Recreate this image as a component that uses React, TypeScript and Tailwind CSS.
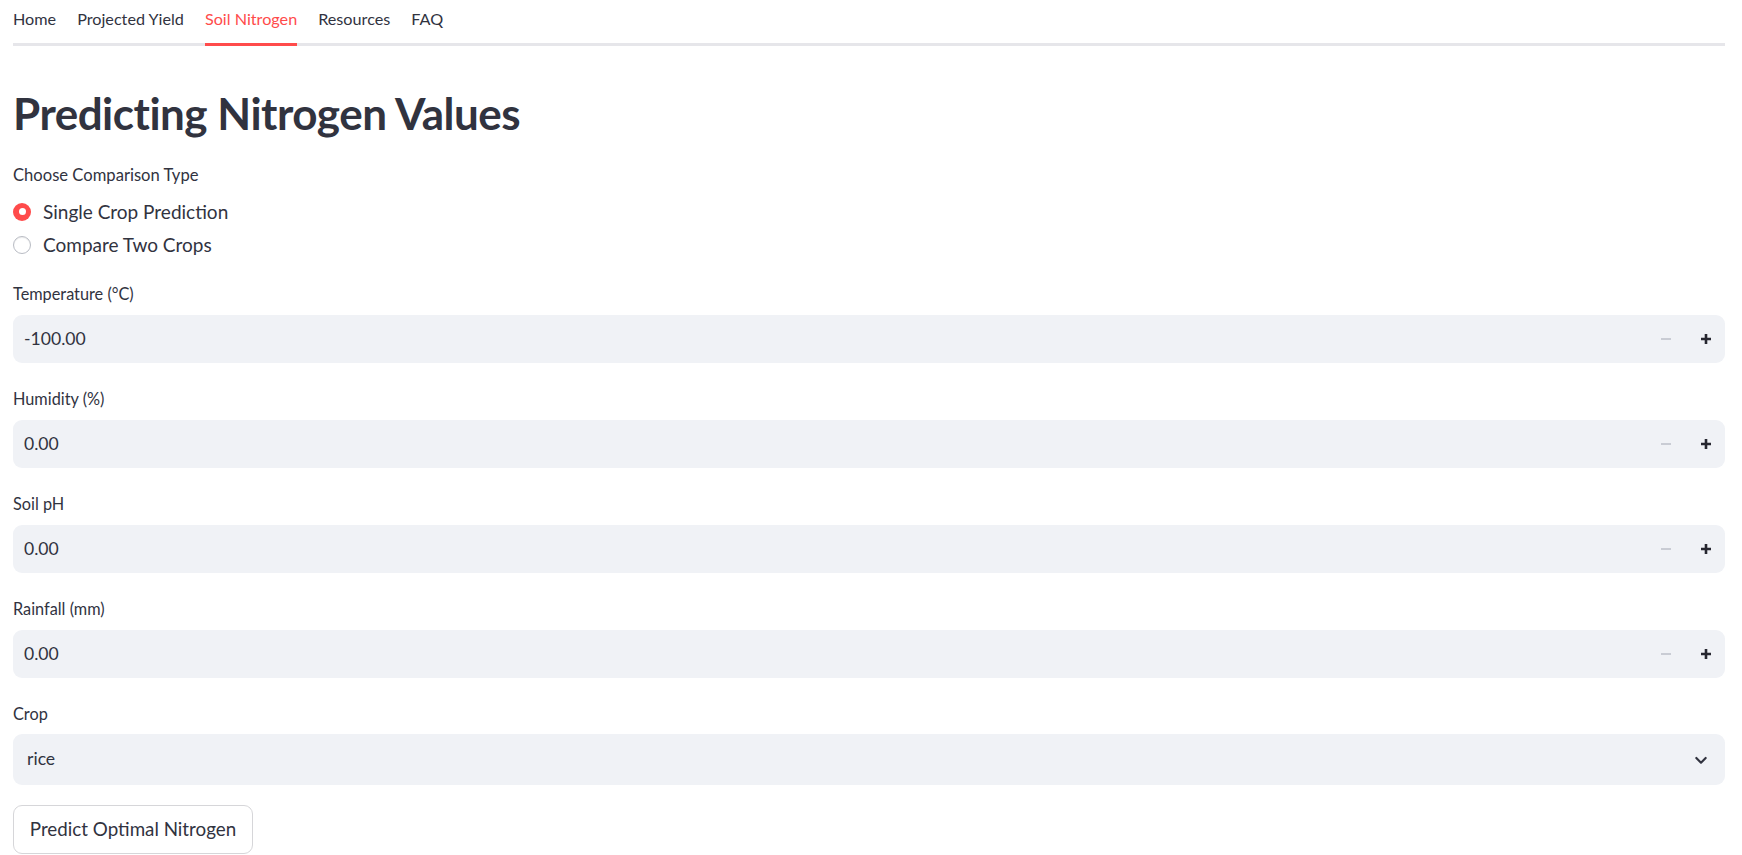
import React from "react";

const font = { fontFamily: '"Source Sans Pro", Lato, "Noto Sans", sans-serif' };

function Plus() {
  return (
    <svg width="12" height="12" viewBox="0 0 12 12">
      <path d="M6 1v10M1 6h10" stroke="#262730" strokeWidth="2.6" />
    </svg>
  );
}
function Minus() {
  return (
    <svg width="12" height="12" viewBox="0 0 12 12">
      <path d="M1 6h10" stroke="#c9ccd4" strokeWidth="2" />
    </svg>
  );
}

function NumberField({ label, value }: { label: string; value: string }) {
  return (
    <div className="flex flex-col">
      <div className="h-[20px] leading-[20px] text-[16.3px] text-[#31333f]">{label}</div>
      <div className="mt-[11px] h-[48px] rounded-[9px] bg-[#f0f2f6] flex items-center pl-[11px] pr-[10px]">
        <span className="flex-1 text-[17.6px] text-[#31333f]">{value}</span>
        <div className="flex items-center gap-[28px] pr-[3px]">
          <Minus />
          <Plus />
        </div>
      </div>
    </div>
  );
}

export default function App() {
  const tabs = ["Home", "Projected Yield", "Soil Nitrogen", "Resources", "FAQ"];
  return (
    <div className="bg-white min-h-[855px] w-[1742px] px-[13px] text-[#31333f]" style={font}>
      <div className="flex gap-[21px] border-b-[3px] border-[#e6e6ea] w-[1712px]">
        {tabs.map((t) => (
          <div
            key={t}
            className={
              "pt-[8px] pb-[13px] -mb-[3px] border-b-[3px] leading-[22px] text-[16.2px] " +
              (t === "Soil Nitrogen" ? "border-[#ff4b4b] text-[#ff4b4b]" : "border-transparent text-[#31333f]")
            }
          >
            {t}
          </div>
        ))}
      </div>

      <h1 className="mt-[41px] text-[44px] leading-[53px] font-bold text-[#31333f] tracking-[-0.5px]">
        Predicting Nitrogen Values
      </h1>

      <div className="mt-[25px] h-[20px] leading-[20px] text-[16.6px]">Choose Comparison Type</div>
      <div className="mt-[10px] flex flex-col">
        <div className="h-[33px] flex items-center gap-[12px]">
          <div className="w-[18px] h-[18px] rounded-full bg-[#ff4b4b] flex items-center justify-center">
            <div className="w-[7px] h-[7px] rounded-full bg-white" />
          </div>
          <span className="text-[19px] leading-[24px]">Single Crop Prediction</span>
        </div>
        <div className="h-[33px] flex items-center gap-[12px]">
          <div className="w-[18px] h-[18px] rounded-full border border-[#b9bcc4] bg-white shadow-[inset_0_1px_1px_rgba(0,0,0,0.08)]" />
          <span className="text-[19px] leading-[24px]">Compare Two Crops</span>
        </div>
      </div>

      <div className="mt-[23px] flex flex-col gap-[26px] w-[1712px]">
        <NumberField label="Temperature (°C)" value="-100.00" />
        <NumberField label="Humidity (%)" value="0.00" />
        <NumberField label="Soil pH" value="0.00" />
        <NumberField label="Rainfall (mm)" value="0.00" />
        <div className="flex flex-col">
          <div className="h-[20px] leading-[20px] text-[16.3px]">Crop</div>
          <div className="mt-[10px] h-[51px] rounded-[9px] bg-[#f0f2f6] flex items-center pl-[14px] pr-[16px]">
            <span className="flex-1 text-[17.6px]">rice</span>
            <svg width="16" height="16" viewBox="0 0 24 24" fill="none">
              <path d="M5 9l7 7 7-7" stroke="#31333f" strokeWidth="3.2" strokeLinecap="round" strokeLinejoin="round" />
            </svg>
          </div>
        </div>
      </div>

      <button className="mt-[20px] h-[49px] w-[240px] rounded-[9px] border border-[#d6d6d9] bg-white text-[18.8px] text-[#31333f] flex items-center justify-center">
        Predict Optimal Nitrogen
      </button>
    </div>
  );
}
